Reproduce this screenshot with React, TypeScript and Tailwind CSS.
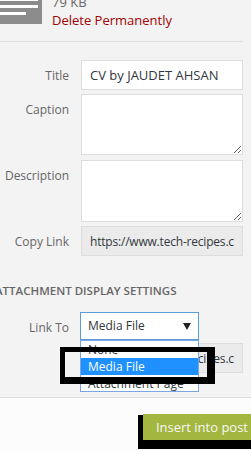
import React from 'react';

const fieldRow = 'flex items-start gap-[12px]';
const labelCls = 'w-[69px] shrink-0 text-right leading-[18px] pt-[7px] text-[12px] text-[#666666] whitespace-nowrap';

const Label: React.FC<{ children: React.ReactNode }> = ({ children }) => (
    <label className={labelCls}>{children}</label>
);

export default function App() {
    return (
        <div
            className="relative w-[251px] h-[451px] overflow-hidden bg-[#f3f3f3] text-[12px] text-[#32373c]"
            style={{ fontFamily: '"Open Sans", "Noto Sans", sans-serif' }}
        >
            {/* file details */}
            <div className="-mt-[7px] h-[49px] mr-[8px] flex gap-[10px] border-b border-[#dddddd]">
                <div className="w-[42px] h-[31px] bg-[#8c8c8c] flex flex-col gap-[4px] pt-[5px]">
                    <div className="w-[38px] h-[3px] bg-white" />
                    <div className="w-[38px] h-[3px] bg-white" />
                    <div className="w-[26px] h-[3px] bg-white" />
                </div>
                <div className="leading-[18px] text-[13px]">
                    <div className="text-[#666666]">79 KB</div>
                    <a className="text-[#a00000]">Delete Permanently</a>
                </div>
            </div>

            {/* attachment fields */}
            <div className="pt-[18px] flex flex-col">
                <div className={fieldRow}>
                    <Label>Title</Label>
                    <input
                        className="w-[162px] h-[30px] px-[8px] bg-white border border-[#dddddd] outline-none text-[13px] text-[#32373c]"
                        defaultValue="CV by JAUDET AHSAN"
                    />
                </div>
                <div className={`${fieldRow} mt-[4px]`}>
                    <Label>Caption</Label>
                    <textarea className="w-[162px] h-[61px] bg-white border border-[#dddddd] outline-none" />
                </div>
                <div className={`${fieldRow} mt-[5px]`}>
                    <Label>Description</Label>
                    <textarea className="w-[162px] h-[62px] bg-white border border-[#dddddd] outline-none" />
                </div>
                <div className={`${fieldRow} mt-[4px]`}>
                    <Label>Copy Link</Label>
                    <input
                        readOnly
                        className="w-[162px] h-[30px] px-[8px] bg-[#ebebeb] border border-[#dddddd] outline-none tracking-[-0.2px] text-[#32373c]"
                        value="https://www.tech-recipes.com/wp-content/uploads/cv.pdf"
                    />
                </div>
            </div>

            {/* display settings */}
            <div className="h-[142px] pt-[26px] border-b border-[#dddddd]">
                <h2 className="-ml-[5px] leading-[18px] text-[11.5px] font-semibold text-[#666666] whitespace-nowrap">
                    ATTACHMENT DISPLAY SETTINGS
                </h2>
                <div className={`${fieldRow} mt-[12px]`}>
                    <Label>Link To</Label>
                    <div className="relative -ml-[1px]">
                        <div className="w-[119px] h-[28px] pl-[7px] pr-[7px] flex items-center justify-between bg-white border border-[#5b9dd9]">
                            <span>Media File</span>
                            <svg width="8" height="7" viewBox="0 0 8 7">
                                <polygon points="0,0 8,0 4,7" fill="#222222" />
                            </svg>
                        </div>
                    </div>
                </div>
                <div className={`${fieldRow} mt-[3px]`}>
                    <div className="w-[69px] shrink-0" />
                    <input
                        readOnly
                        className="w-[162px] h-[30px] px-[8px] bg-[#ebebeb] border border-[#dddddd] outline-none tracking-[-0.2px] text-[#32373c]"
                        value="https://www.tech-recipes.cc"
                    />
                </div>
            </div>

            {/* open select list */}
            <ul className="absolute left-[80px] top-[340px] w-[119px] h-[52px] bg-white border border-[#7aa7e0] leading-[17px] z-10">
                <li className="pl-[7px] h-[17px]">None</li>
                <li className="pl-[7px] h-[17px] bg-[#1e90ff] text-white">Media File</li>
                <li className="pl-[7px] h-[17px]">Attachment Page</li>
            </ul>
            <div className="absolute left-[60px] top-[347px] w-[155px] h-[37px] border-t-[5px] border-l-[5px] border-r-[8px] border-b-[7px] border-black z-20" />

            {/* toolbar */}
            <div className="relative h-[54px] bg-[#fcfcfc] flex justify-end items-start">
                <div className="absolute left-[138px] top-[17px] w-[120px] h-[34px] bg-white border-l-[5px] border-t-[10px] border-b-[9px] border-black" />
                <button className="relative z-10 mt-[16px] -mr-[7px] h-[26px] pl-[13px] pr-[10px] bg-[#a3b640] text-[13px] text-[#f7f7f7] leading-[26px] whitespace-nowrap">
                    Insert into post
                </button>
            </div>
        </div>
    );
}
